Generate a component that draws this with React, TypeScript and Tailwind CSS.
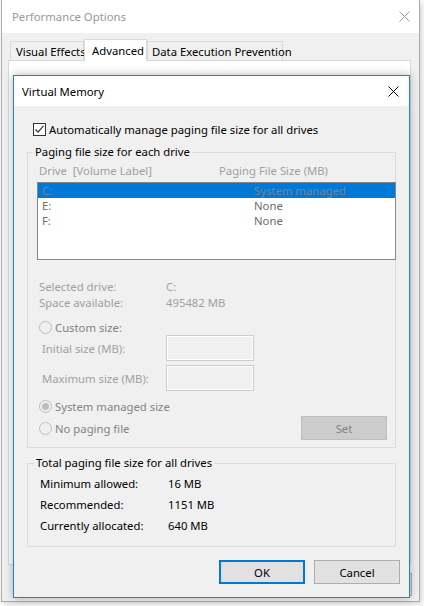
import React from 'react';

const font = { fontFamily: '"Noto Sans", "Liberation Sans", sans-serif' };

function CloseGlyph({ color = '#000' }: { color?: string }) {
  return (
    <svg width="11" height="11" viewBox="0 0 11 11">
      <path d="M0.5 0.5 L10.5 10.5 M10.5 0.5 L0.5 10.5" stroke={color} strokeWidth="1" />
    </svg>
  );
}

function Radio({ label, checked }: { label: string; checked?: boolean }) {
  return (
    <div className="flex h-[13px] items-center">
      <span className="ml-[2px] flex h-[13px] w-[13px] items-center justify-center rounded-full border border-[#bcbcbc] bg-[#f0f0f0]">
        {checked && <span className="h-[7px] w-[7px] rounded-full bg-[#bcbcbc]" />}
      </span>
      <span className="ml-[3px] text-[#838383]">{label}</span>
    </div>
  );
}

function SizeInput({ label }: { label: string }) {
  return (
    <div className="flex items-center">
      <span className="ml-[5px] w-[124px] text-[#a0a0a0]">{label}</span>
      <span className="h-[26px] w-[88px] border border-[#cccccc] bg-[#f0f0f0] shadow-[inset_0_0_0_1px_#ffffff]" />
    </div>
  );
}

export default function App() {
  const drives = [
    { d: 'C:', s: 'System managed', sel: true },
    { d: 'E:', s: 'None' },
    { d: 'F:', s: 'None' },
  ];

  return (
    <div className="relative h-[606px] w-[424px] overflow-hidden bg-white text-[11.3px] leading-[15px] text-black" style={font}>
      {/* Performance Options window (behind) */}
      <div className="absolute left-[1px] top-0 flex h-[602px] w-[419px] flex-col border-x border-b border-[#aaaaaa] bg-[#f0f0f0] shadow-[2px_2px_6px_rgba(0,0,0,0.18)]">
        <div className="flex h-[33px] items-center justify-between bg-white pl-[10px] pr-[9px]">
          <span className="text-[#999999]">Performance Options</span>
          <CloseGlyph color="#999999" />
        </div>
        <div className="ml-[8px] mt-[6px] flex h-[21px] items-end whitespace-nowrap">
          <div className="flex h-[19px] w-[74px] items-center border border-b-0 border-[#d9d9d9] pl-[5px]">Visual Effects</div>
          <div className="relative z-10 -mb-[1px] flex h-[22px] w-[63px] items-center border border-b-0 border-[#d9d9d9] bg-white pl-[7px]">Advanced</div>
          <div className="flex h-[19px] w-[136px] items-center border border-b-0 border-[#d9d9d9] pl-[4px]">Data Execution Prevention</div>
        </div>
        <div className="ml-[6px] h-[505px] w-[403px] border border-[#d9d9d9] bg-white" />
        <div className="mr-[7px] mt-[8px] flex justify-end gap-[8px]">
          <div className="h-[23px] w-[75px] border border-[#adadad] bg-[#e1e1e1]" />
          <div className="h-[23px] w-[75px] border border-[#adadad] bg-[#e1e1e1]" />
        </div>
      </div>

      {/* Virtual Memory dialog */}
      <div className="absolute left-[13px] top-[75px] flex h-[523px] w-[397px] flex-col border border-[#1883d7] bg-[#f0f0f0] shadow-[0_0_9px_rgba(0,0,0,0.28)]">
        <div className="flex h-[30px] items-center justify-between bg-white pl-[8px] pr-[10px]">
          <span>Virtual Memory</span>
          <CloseGlyph />
        </div>

        <div className="flex flex-col px-[13px]">
          <div className="ml-[6px] mt-[17px] flex h-[13px] items-center">
            <span className="flex h-[13px] w-[13px] items-center justify-center border border-[#333333] bg-white">
              <svg width="11" height="11" viewBox="0 0 11 11">
                <path d="M1.5 5.5 L4 8.2 L9.5 1.8" fill="none" stroke="#333333" strokeWidth="1.2" />
              </svg>
            </span>
            <span className="ml-[3px]">Automatically manage paging file size for all drives</span>
          </div>

          <fieldset className="mt-[8px] border border-[#dcdcdc] pb-[7px]">
            <legend className="ml-[5px] px-[2px] leading-[16px]">Paging file size for each drive</legend>
            <div className="pl-[9px]">
              <div className="ml-[2px] mt-[3px] grid h-[15px] grid-cols-[180px_1fr] text-[#a0a0a0]">
                <span>Drive&nbsp; [Volume Label]</span>
                <span>Paging File Size (MB)</span>
              </div>
              <div className="-mr-[1px] mt-[4px] h-[78px] border border-[#828790] bg-white">
                {drives.map((r) => (
                  <div
                    key={r.d}
                    className={`grid h-[15px] grid-cols-[212px_1fr] pl-[4px] ${r.sel ? 'bg-[#0078d7] text-[#808080]' : 'text-[#6d6d6d]'}`}
                  >
                    <span>{r.d}</span>
                    <span>{r.s}</span>
                  </div>
                ))}
              </div>

              <div className="ml-[2px] mt-[19px] grid grid-cols-[127px_1fr] text-[#a0a0a0]">
                <span className="h-[16px]">Selected drive:</span>
                <span className="h-[16px]">C:</span>
                <span className="h-[16px]">Space available:</span>
                <span className="h-[16px]">495482 MB</span>
              </div>

              <div className="mt-[10px]">
                <Radio label="Custom size:" />
              </div>
              <div className="mt-[1px]">
                <SizeInput label="Initial size (MB):" />
              </div>
              <div className="mt-[4px]">
                <SizeInput label="Maximum size (MB):" />
              </div>

              <div className="flex items-end justify-between">
                <div className="mb-[5px] flex flex-col gap-[9px] pt-[9px]">
                  <Radio label="System managed size" checked />
                  <Radio label="No paging file" />
                </div>
                <div className="mr-[8px] flex h-[24px] w-[86px] items-center justify-center border border-[#bfbfbf] bg-[#cccccc] text-[#838383]">
                  Set
                </div>
              </div>
            </div>
          </fieldset>

          <fieldset className="mt-[7px] border border-[#dcdcdc] pb-[10px]">
            <legend className="ml-[6px] px-[2px] leading-[16px]">Total paging file size for all drives</legend>
            <div className="mt-[2px] grid grid-cols-[128px_1fr] pl-[12px]">
              {[
                ['Minimum allowed:', '16 MB'],
                ['Recommended:', '1151 MB'],
                ['Currently allocated:', '640 MB'],
              ].map(([k, v]) => (
                <React.Fragment key={k}>
                  <span className="flex h-[21px] items-center">{k}</span>
                  <span className="flex h-[21px] items-center">{v}</span>
                </React.Fragment>
              ))}
            </div>
          </fieldset>

          <div className="mt-[13px] flex justify-end gap-[9px]">
            <div className="flex h-[24px] w-[86px] items-center justify-center border-2 border-[#0078d7] bg-[#e1e1e1]">OK</div>
            <div className="-mr-[4px] flex h-[24px] w-[86px] items-center justify-center border border-[#adadad] bg-[#e1e1e1]">Cancel</div>
          </div>
        </div>
      </div>
    </div>
  );
}
